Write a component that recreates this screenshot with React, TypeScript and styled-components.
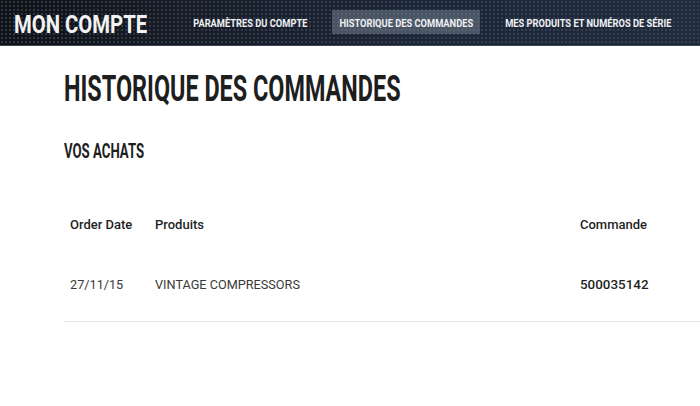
import React from "react";
import styled, { createGlobalStyle } from "styled-components";

const Global = createGlobalStyle`
  html, body { margin: 0; padding: 0; background: #fff; }
  body { font-family: Roboto, "Liberation Sans", sans-serif; }
`;

const Header = styled.header`
  height: 45px;
  display: flex;
  align-items: center;
  padding-left: 14px;
  border-bottom: 1px solid #3b4452;
  background-color: #1a2130;
  background-image:
    radial-gradient(circle, rgba(70, 84, 104, 0.55) 0.8px, transparent 1.2px),
    linear-gradient(90deg, #0f1216 0%, #161b25 25%, #1d2637 60%, #1f2a3b 100%);
  background-size: 4px 4px, 100% 100%;
`;

/* Narrow display type: set at a size whose width matches, stretched upward */
const Brand = styled.div`
  font-family: Roboto, "Liberation Sans", sans-serif;
  font-weight: 700;
  font-size: 20.3px;
  line-height: 24px;
  color: #f2f2f2;
  transform: scaleY(1.31);
  margin-right: 39px;
  margin-top: 3px;
  white-space: nowrap;
`;

const Nav = styled.nav`
  display: flex;
  align-items: center;
  gap: 18px;
`;

const NavItem = styled.a<{ $active?: boolean }>`
  display: flex;
  align-items: center;
  height: 24px;
  padding: 0 7px;
  margin-top: -1px;
  text-decoration: none;
  background: ${(p) => (p.$active ? "rgba(120, 132, 146, 0.5)" : "transparent")};
`;

const NavLabel = styled.span`
  display: inline-block;
  font-family: Roboto, "Liberation Sans", sans-serif;
  font-weight: 700;
  font-size: 9.3px;
  line-height: 12px;
  color: #eef0f2;
  white-space: nowrap;
  transform: scaleY(1.25);
  margin-top: 2px;
`;

const Main = styled.main`
  padding: 0 0 0 64px;
`;

const Title = styled.h1`
  font-family: Roboto, "Liberation Sans", sans-serif;
  font-weight: 700;
  font-size: 23.4px;
  color: #1e1e1e;
  margin: 22px 0 0;
  line-height: 40px;
  transform: scaleY(1.6);
  transform-origin: left center;
  white-space: nowrap;
`;

const Subtitle = styled.h2`
  font-family: Roboto, "Liberation Sans", sans-serif;
  font-weight: 700;
  font-size: 13.2px;
  color: #1e1e1e;
  margin: 34px 0 0;
  line-height: 20px;
  transform: scaleY(1.48);
  transform-origin: left center;
  white-space: nowrap;
`;

const Table = styled.div`
  margin-top: 38px;
  border-bottom: 1px solid #e4e4e4;
`;

const Row = styled.div<{ $head?: boolean }>`
  display: grid;
  grid-template-columns: 85px 425px 1fr;
  padding-left: 6px;
  height: ${(p) => (p.$head ? "48px" : "73px")};
  align-items: center;
`;

const Head = styled.div`
  font-size: 13px;
  font-weight: 500;
  color: #1f1f1f;
`;

const Cell = styled.div<{ $strong?: boolean }>`
  font-size: ${(p) => (p.$strong ? "13.4px" : "12.7px")};
  font-weight: ${(p) => (p.$strong ? 500 : 400)};
  color: ${(p) => (p.$strong ? "#1f1f1f" : "#3a3a3a")};
`;

export default function App() {
  return (
    <>
      <Global />
      <Header>
        <Brand>MON COMPTE</Brand>
        <Nav>
          <NavItem>
            <NavLabel>PARAMÈTRES DU COMPTE</NavLabel>
          </NavItem>
          <NavItem $active>
            <NavLabel>HISTORIQUE DES COMMANDES</NavLabel>
          </NavItem>
          <NavItem>
            <NavLabel>MES PRODUITS ET NUMÉROS DE SÉRIE</NavLabel>
          </NavItem>
        </Nav>
      </Header>
      <Main>
        <Title>HISTORIQUE DES COMMANDES</Title>
        <Subtitle>VOS ACHATS</Subtitle>
        <Table>
          <Row $head>
            <Head>Order Date</Head>
            <Head>Produits</Head>
            <Head>Commande</Head>
          </Row>
          <Row>
            <Cell>27/11/15</Cell>
            <Cell>VINTAGE COMPRESSORS</Cell>
            <Cell $strong>500035142</Cell>
          </Row>
        </Table>
      </Main>
    </>
  );
}
